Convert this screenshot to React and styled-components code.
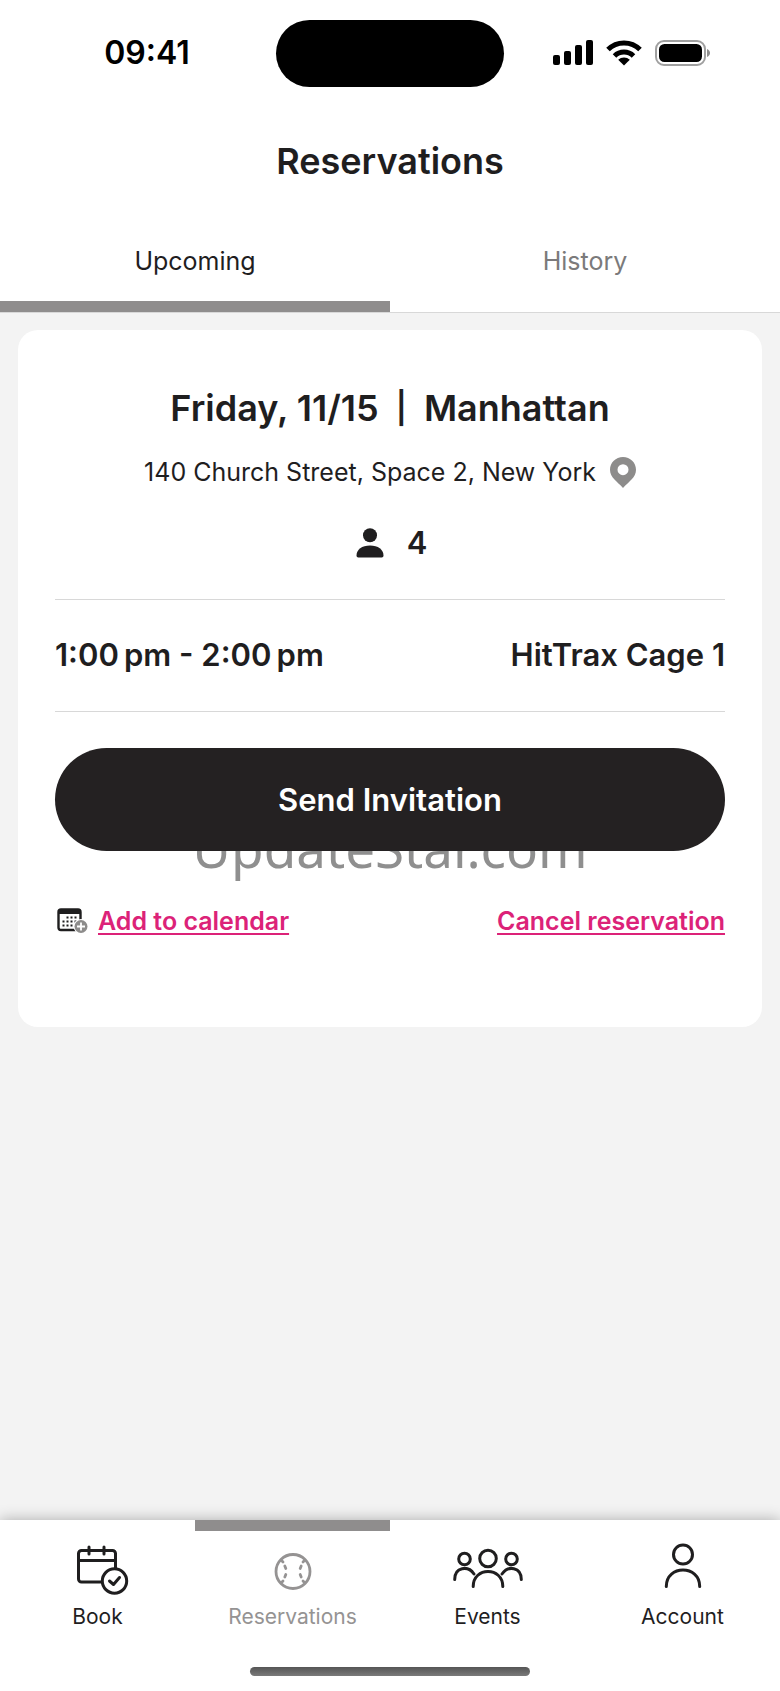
import { useState } from "react";
import styled, { createGlobalStyle, ThemeProvider } from "styled-components";

const theme = {
  colors: {
    dark: "#1f1e1f",
    button: "#242122",
    grey: "#8f8d8d",
    greyText: "#7b7a7b",
    greyLight: "#d8d8d8",
    background: "#f3f3f3",
    white: "#ffffff",
    pink: "#dc2278",
  },
  fonts: {
    size: { XS: "21px", SM: "25px", MD: "31px", LG: "36px" },
    weights: { regular: 400, semiBold: 600 },
  },
};

const navItems = [
  { id: "book", label: "Book", Icon: BookIcon },
  { id: "reservations", label: "Reservations", Icon: BaseballIcon },
  { id: "events", label: "Events", Icon: EventsIcon },
  { id: "account", label: "Account", Icon: AccountIcon },
];

export default function App() {
  return (
    <ThemeProvider theme={theme}>
      <GlobalStyle />
      <PageStyled>
        <StatusBar />
        <Header />
        <Main>
          <ReservationCard />
        </Main>
        <BottomNav />
      </PageStyled>
    </ThemeProvider>
  );
}

function StatusBar() {
  return (
    <StatusBarStyled>
      <Time>09:41</Time>
      <Island />
      <StatusIcons>
        <SignalIcon />
        <WifiIcon />
        <BatteryIcon />
      </StatusIcons>
    </StatusBarStyled>
  );
}

function Header() {
  const [tab, setTab] = useState("Upcoming");

  return (
    <header>
      <Title>Reservations</Title>
      <Tabs role="tablist">
        {["Upcoming", "History"].map((name) => (
          <Tab
            key={name}
            type="button"
            role="tab"
            aria-selected={tab === name}
            $active={tab === name}
            onClick={() => setTab(name)}
          >
            {name}
          </Tab>
        ))}
      </Tabs>
    </header>
  );
}

function ReservationCard() {
  return (
    <Card>
      <CardTitle>
        <span>Friday, 11/15</span>
        <Separator>|</Separator>
        <span>Manhattan</span>
      </CardTitle>
      <Address>
        140 Church Street, Space 2, New York
        <PinIcon />
      </Address>
      <Guests>
        <PersonIcon />
        <span>4</span>
      </Guests>
      <Slot>
        <span>{"1:00\u2009pm - 2:00\u2009pm"}</span>
        <span>HitTrax Cage 1</span>
      </Slot>
      <InviteZone>
        <Watermark>UpdateStar.com</Watermark>
        <InviteButton type="button">Send Invitation</InviteButton>
      </InviteZone>
      <Actions>
        <CalendarAction>
          <CalendarPlusIcon />
          <ActionLink href="#calendar">Add to calendar</ActionLink>
        </CalendarAction>
        <ActionLink href="#cancel">Cancel reservation</ActionLink>
      </Actions>
    </Card>
  );
}

function BottomNav() {
  return (
    <BottomNavStyled>
      <NavList>
        {navItems.map(({ id, label, Icon }) => (
          <NavLink key={id} href={"#" + id} $active={id === "reservations"}>
            <Icon />
            <span>{label}</span>
          </NavLink>
        ))}
      </NavList>
      <HomeIndicator />
    </BottomNavStyled>
  );
}

function SignalIcon() {
  return (
    <svg width="40" height="26" viewBox="0 0 40 26" fill="#000" aria-hidden="true">
      <rect x="0" y="15" width="7" height="10" rx="2" />
      <rect x="11" y="11" width="7" height="14" rx="2" />
      <rect x="22" y="5" width="7" height="20" rx="2" />
      <rect x="33" y="0" width="7" height="25" rx="2" />
    </svg>
  );
}

function WifiIcon() {
  return (
    <svg width="36" height="26" viewBox="0 0 36 26" aria-hidden="true">
      <g fill="none" stroke="#000" strokeWidth="5">
        <path d="M2 9.600A22.500 22.500 0 0 1 34 9.600" />
        <path d="M8.500 16A13.500 13.500 0 0 1 27.500 16" />
      </g>
      <path d="M12.200 19.800a8.500 8.500 0 0 1 11.600 0L18 25.500z" fill="#000" />
    </svg>
  );
}

function BatteryIcon() {
  return (
    <svg width="56" height="26" viewBox="0 0 56 26" aria-hidden="true">
      <rect x="1" y="1" width="49" height="24" rx="8" fill="none" stroke="#a0a0a0" strokeWidth="2" />
      <rect x="4" y="4" width="43" height="18" rx="5.500" fill="#000" />
      <path d="M52 9c4 1.500 4 6.500 0 8z" fill="#8f8f8f" />
    </svg>
  );
}

function PinIcon() {
  return (
    <svg width="26" height="31" viewBox="0 0 26 31" aria-hidden="true">
      <path
        fillRule="evenodd"
        fill="#8d8c8b"
        d="M13 0C5.800 0 0 5.600 0 12.800 0 20.500 7 24.500 13 31c6-6.500 13-10.500 13-18.200C26 5.600 20.200 0 13 0zm0 7.200a5.500 5.500 0 1 1 0 11 5.500 5.500 0 0 1 0-11z"
      />
    </svg>
  );
}

function PersonIcon() {
  return (
    <svg width="28" height="30" viewBox="0 0 28 30" fill="#1f1e1f" aria-hidden="true">
      <circle cx="14" cy="7.200" r="7" />
      <path d="M.5 27.500C.5 21.500 6 17.500 14 17.500s13.500 4 13.500 10c0 1.200-.7 2-1.800 2H2.300c-1.100 0-1.800-.8-1.800-2z" />
    </svg>
  );
}

function CalendarPlusIcon() {
  return (
    <svg width="31" height="26" viewBox="0 0 31 26" aria-hidden="true">
      <rect x="1.500" y="1.500" width="22" height="20.500" rx="2.500" fill="none" stroke="#1f1e1f" strokeWidth="2.400" />
      <path d="M2 1.500h21.500V6H2z" fill="#1f1e1f" />
      <path
        d="M9.500 9.500H21M5.500 13.500H21M5.500 17.500H18"
        stroke="#1f1e1f"
        strokeWidth="2"
        strokeDasharray="2 2"
      />
      <circle cx="24" cy="18.500" r="7.500" fill="#fff" />
      <circle cx="24" cy="18.500" r="6.500" fill="#8d8c8b" />
      <path d="M24 14.500v8M20 18.500h8" stroke="#fff" strokeWidth="1.800" />
    </svg>
  );
}

function BookIcon() {
  return (
    <NavSvg viewBox="0 0 72 48" aria-hidden="true">
      <path d="M39 42H19.500a3 3 0 0 1-3-3V13.500a3 3 0 0 1 3-3h31a3 3 0 0 1 3 3V28M16.500 20.500h37M27 7v7M42 7v7" />
      <circle cx="52.500" cy="41" r="12.200" />
      <path d="M47.500 41l4 3.500 6-7" />
    </NavSvg>
  );
}

function BaseballIcon() {
  return (
    <NavSvg viewBox="0 0 72 48" aria-hidden="true">
      <g strokeWidth="2.800">
        <circle cx="36" cy="31.500" r="17" />
        <path d="M24.500 20.500l1.500 1.500M47.500 20.500L46 22M24.500 42.500L26 41M47.500 42.500L46 41" />
        <path d="M27.800 26l1 2.500M28.800 34.500l-1 2.500M44.200 26l-1 2.500M43.200 34.500l1 2.500" />
      </g>
    </NavSvg>
  );
}

function EventsIcon() {
  return (
    <NavSvg viewBox="0 0 72 48" aria-hidden="true">
      <circle cx="12.500" cy="19" r="5.800" />
      <circle cx="36" cy="18.500" r="8.300" />
      <circle cx="59.500" cy="19" r="5.800" />
      <path d="M2.700 39.500C2.700 27 16 25 22 34M69.300 39.500C69.300 27 56 25 50 34" />
      <path d="M21.200 46.500C21.200 26.500 50.800 26.500 50.800 46.500" />
    </NavSvg>
  );
}

function AccountIcon() {
  return (
    <NavSvg viewBox="0 0 72 48" aria-hidden="true">
      <circle cx="36" cy="14.500" r="9.500" />
      <path d="M19.300 46.500C19.300 24.500 52.700 24.500 52.700 46.500" />
    </NavSvg>
  );
}

const GlobalStyle = createGlobalStyle`
  * {
    box-sizing: border-box;
  }

  body {
    margin: 0;
    font-family: Inter, "Liberation Sans", sans-serif;
    color: ${theme.colors.dark};
  }
`;

const PageStyled = styled.div`
  display: flex;
  flex-direction: column;
  min-height: 100vh;
  background-color: ${({ theme }) => theme.colors.white};
`;

const StatusBarStyled = styled.div`
  display: grid;
  grid-template-columns: 1fr auto 1fr;
  align-items: center;
  height: 107px;
  color: #000;
`;

const Time = styled.span`
  justify-self: center;
  padding: 0 0 2px 18px;
  font-size: 32px;
  font-weight: ${({ theme }) => theme.fonts.weights.semiBold};
`;

const Island = styled.div`
  width: 228px;
  height: 67px;
  border-radius: 34px;
  background-color: #000;
`;

const StatusIcons = styled.div`
  display: flex;
  justify-content: center;
  gap: 13px;
  padding: 0 20px 2px 0;
`;

const Title = styled.h1`
  margin: 0;
  font-size: ${({ theme }) => theme.fonts.size.LG};
  font-weight: ${({ theme }) => theme.fonts.weights.semiBold};
  line-height: 109px;
  text-align: center;
`;

const Tabs = styled.div`
  display: flex;
  border-bottom: 1px solid ${({ theme }) => theme.colors.greyLight};
`;

const Tab = styled.button`
  flex: 1;
  padding: 31px 0 26px;
  border: none;
  border-bottom: 11px solid ${({ theme, $active }) => ($active ? theme.colors.grey : "transparent")};
  background: none;
  font-family: inherit;
  font-size: ${({ theme }) => theme.fonts.size.SM};
  line-height: 28px;
  color: ${({ theme, $active }) => ($active ? theme.colors.dark : theme.colors.greyText)};
  cursor: pointer;
`;

const Main = styled.main`
  flex: 1;
  padding: 17px 18px;
  background-color: ${({ theme }) => theme.colors.background};
`;

const Card = styled.section`
  padding: 56px 37px 90px;
  border-radius: 20px;
  background-color: ${({ theme }) => theme.colors.white};
`;

const CardTitle = styled.h2`
  display: flex;
  justify-content: center;
  gap: 17px;
  margin: 0 0 26px;
  font-size: ${({ theme }) => theme.fonts.size.LG};
  font-weight: ${({ theme }) => theme.fonts.weights.semiBold};
  line-height: 44px;
`;

const Separator = styled.span`
  font-size: ${({ theme }) => theme.fonts.size.MD};
`;

const Address = styled.div`
  display: flex;
  justify-content: center;
  align-items: center;
  gap: 14px;
  margin-bottom: 35px;
  font-size: ${({ theme }) => theme.fonts.size.SM};
  line-height: 32px;
`;

const Guests = styled.div`
  display: flex;
  justify-content: center;
  align-items: center;
  gap: 23px;
  padding-left: 3px;
  margin-bottom: 36px;
  font-size: ${({ theme }) => theme.fonts.size.MD};
  font-weight: ${({ theme }) => theme.fonts.weights.semiBold};
  line-height: 40px;
`;

const Slot = styled.div`
  display: flex;
  justify-content: space-between;
  align-items: center;
  padding: 35px 0 36px;
  border: solid ${({ theme }) => theme.colors.greyLight};
  border-width: 1px 0;
  font-size: ${({ theme }) => theme.fonts.size.MD};
  font-weight: ${({ theme }) => theme.fonts.weights.semiBold};
  line-height: 40px;
`;

const InviteZone = styled.div`
  position: relative;
  margin: 36px 0 54px;
`;

// sits behind the button, only its lower half shows
const Watermark = styled.span`
  position: absolute;
  right: 0;
  bottom: -37px;
  left: 0;
  font-family: "Noto Sans", sans-serif;
  font-size: 53px;
  line-height: 80px;
  text-align: center;
  color: #8f8f8f;
`;

const InviteButton = styled.button`
  position: relative;
  display: block;
  width: 100%;
  height: 103px;
  border: none;
  border-radius: 52px;
  background-color: ${({ theme }) => theme.colors.button};
  font-family: inherit;
  font-size: ${({ theme }) => theme.fonts.size.MD};
  font-weight: ${({ theme }) => theme.fonts.weights.semiBold};
  color: ${({ theme }) => theme.colors.white};
  cursor: pointer;
`;

const Actions = styled.div`
  display: flex;
  justify-content: space-between;
  align-items: center;
`;

const CalendarAction = styled.div`
  display: flex;
  align-items: center;
  gap: 10px;
  padding-left: 2px;
`;

const ActionLink = styled.a`
  font-size: ${({ theme }) => theme.fonts.size.SM};
  font-weight: ${({ theme }) => theme.fonts.weights.semiBold};
  line-height: 32px;
  color: ${({ theme }) => theme.colors.pink};
  text-decoration-thickness: 2px;
  text-underline-offset: 3px;
  text-decoration-skip-ink: none;
`;

const BottomNavStyled = styled.footer`
  position: relative;
  padding-bottom: 15px;
  background-color: ${({ theme }) => theme.colors.white};
  box-shadow: 0 0 14px rgba(0, 0, 0, 0.3);
`;

const NavList = styled.nav`
  display: flex;
  margin-bottom: 36px;
`;

const NavLink = styled.a`
  display: flex;
  flex: 1;
  flex-direction: column;
  align-items: center;
  gap: 15px;
  padding-top: 9px;
  border-top: 11px solid ${({ theme, $active }) => ($active ? theme.colors.grey : "transparent")};
  font-size: ${({ theme }) => theme.fonts.size.XS};
  line-height: 28px;
  text-decoration: none;
  color: ${({ theme, $active }) => ($active ? "#959393" : theme.colors.dark)};
`;

const NavSvg = styled.svg`
  width: 72px;
  height: 48px;
  overflow: visible;
  fill: none;
  stroke: currentColor;
  stroke-width: 3;
  stroke-linecap: round;
  stroke-linejoin: round;
`;

const HomeIndicator = styled.div`
  width: 280px;
  height: 9px;
  margin: 0 auto;
  border-radius: 5px;
  background: linear-gradient(#555, #7a7a7a);
`;
